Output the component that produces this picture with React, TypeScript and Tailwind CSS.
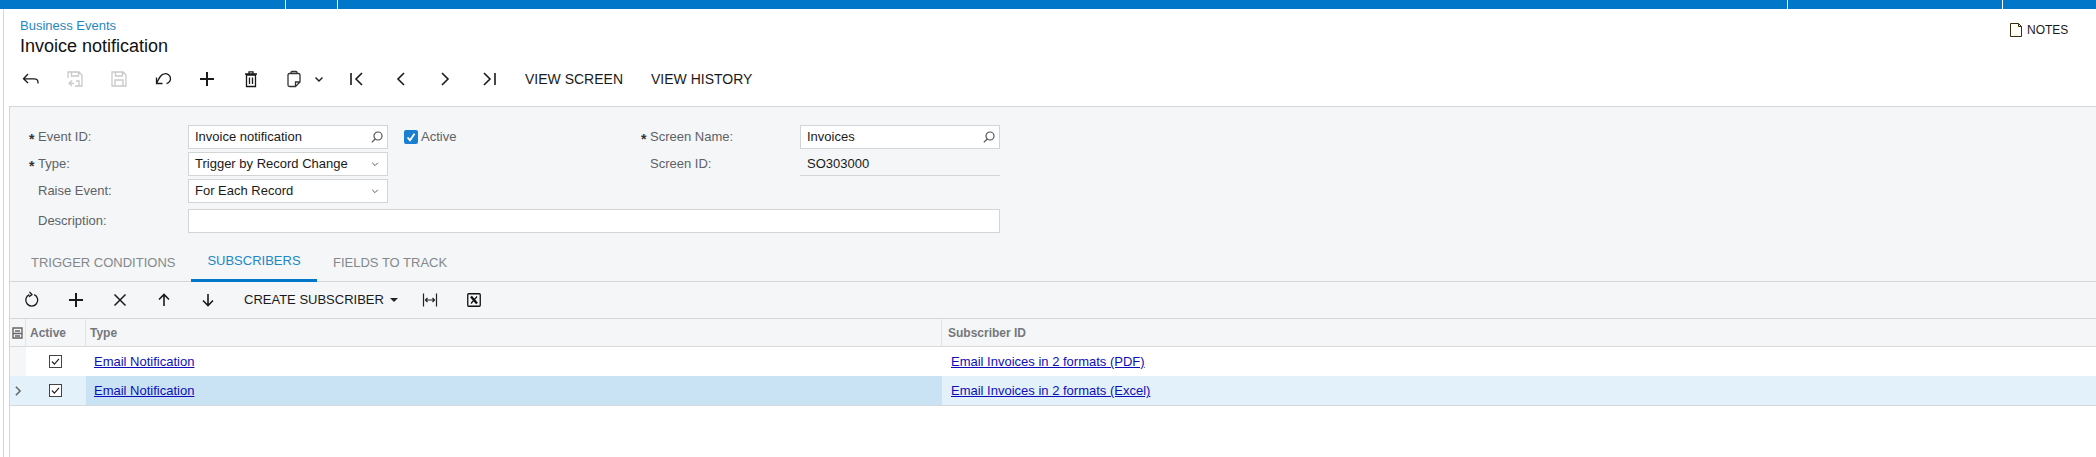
import React from "react";

const FONT = "font-['Liberation_Sans',Arial,sans-serif]";

function Icon({ d, size = 20, color = "#1a1a1a", width = 1.3 }: { d: string; size?: number; color?: string; width?: number }) {
  return (
    <svg width={size} height={size} viewBox="0 0 20 20" fill="none" stroke={color} strokeWidth={width}>
      <path d={d} />
    </svg>
  );
}

const ICONS = {
  back: "M7 5 L2.5 9.8 L7 14 M2.5 9.8 H13.5 a3.5 3.5 0 0 1 3.5 3.5 v1.2",
  saveBack: "M3 9V3h11l3 3v11h-7 M6.5 3v4h7V3 M11 12h3v5 M7 11.5l-3 2.8 3 2.7 M4 14.3h5",
  save: "M3 3h11l3 3v11H3z M6.5 3v4h7V3 M6 17v-6h8v6",
  undo: "M3.5 8.5V14.5H9.5 M3.5 14.5 C6 9 8 4.8 11.5 4.8 a5 5 0 0 1 2 9.8",
  plus: "M3 10H17 M10 3V17",
  trash: "M5.5 6h9v11.5h-9z M4 5h12 M8 4.5V2.8h4v1.7 M8.5 8.5v6.5 M11.5 8.5v6.5",
  copy: "M7 4.5H5.5a1.5 1.5 0 0 0-1.5 1.5V16a1.5 1.5 0 0 0 1.5 1.5H11.5L16 13V6a1.5 1.5 0 0 0-1.5-1.5H13 M7 4.5V3.5a1 1 0 0 1 1-1h4a1 1 0 0 1 1 1V4.5z M16 13h-4.5v4.5",
  chevronDown: "M6.5 8.5l3.5 3.5 3.5-3.5",
  first: "M4 4V16 M15 4L9 10l6 6",
  prev: "M13 4L7 10l6 6",
  next: "M7 4l6 6-6 6",
  last: "M16 4V16 M5 4l6 6-6 6",
  refresh: "M12.2 4.6 A6 6 0 1 1 7.3 4.6 M7.5 2 L10 4.6 L7 6.8",
  close: "M4.5 4.5L15.5 15.5 M15.5 4.5L4.5 15.5",
  up: "M10 16V4.5 M5 9.5L10 4.5l5 5",
  down: "M10 4V15.5 M5 10.5l5 5 5-5",
  fit: "M3.5 3.5V16.5 M16.5 3.5V16.5 M5.5 10H14.5 M7.5 8L5.5 10l2 2 M12.5 8l2 2-2 2",
};

function ToolButton({ d, color, width }: { d: string; color?: string; width?: number }) {
  return (
    <div className="w-[44px] h-full flex items-center justify-center">
      <Icon d={d} color={color} width={width} />
    </div>
  );
}

function ExcelIcon() {
  return (
    <svg width="14" height="14" viewBox="0 0 14 14" fill="none">
      <rect x="0.75" y="0.75" width="12.5" height="12.5" rx="1" stroke="#111" strokeWidth="1.3" />
      <path d="M4 3.5L10 10.5" stroke="#111" strokeWidth="2.4" />
      <path d="M10 3.5L4 10.5" stroke="#111" strokeWidth="1.2" />
    </svg>
  );
}

function FormLabel({ text, required }: { text: string; required?: boolean }) {
  return (
    <div className="flex items-center w-[159px] shrink-0 text-[13px] text-[#5f6266]">
      <span className="w-[9px] text-[14px] leading-[14px] font-bold text-[#333] pt-[3px]">{required ? "*" : ""}</span>
      <span className="pb-[1px]">{text}</span>
    </div>
  );
}

function Field({ text, icon, className }: { text?: string; icon?: "search" | "chevron"; className?: string }) {
  return (
    <div className={`flex items-center justify-between h-[24px] pl-[6px] pr-[3px] bg-white border border-[#d2d4d6] text-[13px] text-[#1a1a1a] ${className ?? "w-[200px]"}`}>
      <span>{text}</span>
      {icon === "search" && (
        <svg width="14" height="14" viewBox="0 0 14 14" fill="none" stroke="#555" strokeWidth="1.2">
          <circle cx="8" cy="6" r="4" />
          <path d="M5.2 9L1.8 12.4" />
        </svg>
      )}
      {icon === "chevron" && (
        <span className="mr-[1px]">
          <Icon d="M6.5 8.5l3.5 3.5 3.5-3.5" size={16} color="#555" width={1.2} />
        </span>
      )}
    </div>
  );
}

function GridCheck() {
  return (
    <svg width="13" height="13" viewBox="0 0 13 13" fill="none">
      <rect x="0.5" y="0.5" width="12" height="12" fill="white" stroke="#444" />
      <path d="M3 6.5l2.4 2.6L10 3.8" stroke="#222" strokeWidth="1.2" />
    </svg>
  );
}

function GridRow({ type, subscriber, selected }: { type: string; subscriber: string; selected?: boolean }) {
  return (
    <div className={`flex text-[13px] ${selected ? "h-[30px] bg-[#e3f1fb] border-b border-[#d5d7d9]" : "h-[29px] bg-white"}`}>
      <div className={`w-[16px] flex items-center justify-center ${selected ? "" : "bg-[#f4f6f8]"}`}>
        {selected && <Icon d="M7 4l6 6-6 6" size={14} color="#666" width={2.2} />}
      </div>
      <div className="w-[60px] flex items-center justify-center pr-[1px]">
        <GridCheck />
      </div>
      <div className={`w-[856px] flex items-center pl-[8px] pt-[1px] ${selected ? "bg-[#c9e3f5]" : ""}`}>
        <a className="underline text-[#0e0eb8]">{type}</a>
      </div>
      <div className="flex-1 flex items-center pl-[9px] pt-[1px]">
        <a className="underline text-[#0e0eb8]">{subscriber}</a>
      </div>
    </div>
  );
}

export default function App() {
  return (
    <div className={`${FONT} w-[2096px] h-[457px] flex flex-col overflow-hidden bg-white text-[#1a1a1a]`}>
      {/* Top bar */}
      <div className="h-[9px] shrink-0 flex bg-[#0277c9]">
        <div className="w-[286px] border-r border-white" />
        <div className="w-[52px] border-r border-white" />
        <div className="w-[1450px] border-r border-white" />
        <div className="w-[215px] border-r border-white" />
      </div>

      <div className="flex-1 flex flex-col ml-[3px] border-l border-[#d4d6d8]">
        {/* Title */}
        <div className="flex justify-between pl-[16px] pt-[9px] h-[50px] shrink-0">
          <div>
            <div className="text-[13px] leading-[16px] text-[#1f88c4]">Business Events</div>
            <div className="text-[18px] leading-[22px] mt-[1px] text-[#111]">Invoice notification</div>
          </div>
          <div className="flex items-center h-[24px] w-[87px] text-[12px] shrink-0">
            <svg width="14" height="16" viewBox="0 0 14 16" fill="#fffef5" stroke="#3a2a10" strokeWidth="1" className="mr-[4px]">
              <path d="M1.5 1.5H9.5L12.5 4.5V14.5H1.5z M9.5 1.5V4.5H12.5" />
            </svg>
            NOTES
          </div>
        </div>

        {/* Main toolbar */}
        <div className="flex items-center h-[40px] pl-[5px] shrink-0 text-[14px]">
          <ToolButton d={ICONS.back} />
          <ToolButton d={ICONS.saveBack} color="#c9c9c9" />
          <ToolButton d={ICONS.save} color="#c9c9c9" />
          <ToolButton d={ICONS.undo} />
          <ToolButton d={ICONS.plus} width={2} />
          <ToolButton d={ICONS.trash} />
          <div className="w-[62px] h-full flex items-center pl-[11px]">
            <Icon d={ICONS.copy} color="#333" />
            <span className="ml-[5px]">
              <Icon d={ICONS.chevronDown} width={1.4} />
            </span>
          </div>
          <ToolButton d={ICONS.first} width={1.6} />
          <ToolButton d={ICONS.prev} width={1.6} />
          <ToolButton d={ICONS.next} width={1.6} />
          <ToolButton d={ICONS.last} width={1.6} />
          <div className="px-[14px]">VIEW SCREEN</div>
          <div className="px-[14px]">VIEW HISTORY</div>
        </div>

        {/* Form panel + grid */}
        <div className="flex-1 flex flex-col ml-[5px] mt-[7px] border-l border-t border-[#d4d6d8]">
          <div className="bg-[#f4f6f8]">
            <div className="flex flex-col pt-[18px] pl-[19px] h-[136px]">
              <div className="flex items-center h-[24px] mb-[3px]">
                <div className="flex items-center w-[612px]">
                  <FormLabel text="Event ID:" required />
                  <Field text="Invoice notification" icon="search" />
                  <div className="flex items-center ml-[16px] text-[13px] text-[#5f6266]">
                    <span className="w-[14px] h-[14px] rounded-[2px] bg-[#1a7fd0] flex items-center justify-center mr-[3px]">
                      <svg width="10" height="10" viewBox="0 0 10 10" fill="none" stroke="white" strokeWidth="1.8">
                        <path d="M1.5 5.5L4 8.2 8.5 1.8" />
                      </svg>
                    </span>
                    <span className="pb-[1px]">Active</span>
                  </div>
                </div>
                <FormLabel text="Screen Name:" required />
                <Field text="Invoices" icon="search" />
              </div>
              <div className="flex items-center h-[24px] mb-[3px]">
                <div className="flex items-center w-[612px]">
                  <FormLabel text="Type:" required />
                  <Field text="Trigger by Record Change" icon="chevron" />
                </div>
                <FormLabel text="Screen ID:" />
                <div className="w-[200px] h-[24px] pl-[7px] flex items-center border-b border-[#d2d4d6] text-[13px]">SO303000</div>
              </div>
              <div className="flex items-center h-[24px] mb-[6px]">
                <FormLabel text="Raise Event:" />
                <Field text="For Each Record" icon="chevron" />
              </div>
              <div className="flex items-center h-[24px]">
                <FormLabel text="Description:" />
                <Field className="w-[812px]" />
              </div>
            </div>

            {/* Tabs */}
            <div className="flex h-[39px] border-b border-[#d4d6d8] text-[13px] text-[#84888c]">
              <div className="w-[181px] flex items-center pl-[21px] pt-[2px]">TRIGGER CONDITIONS</div>
              <div className="w-[126px] h-[39px] flex items-center justify-center border-b-[3px] border-[#0277c9] text-[#1f88c4]">SUBSCRIBERS</div>
              <div className="pl-[16px] flex items-center pt-[2px]">FIELDS TO TRACK</div>
            </div>

            {/* Grid toolbar */}
            <div className="flex items-center h-[37px] border-b border-[#d4d6d8] text-[13px]">
              <ToolButton d={ICONS.refresh} />
              <ToolButton d={ICONS.plus} width={2} />
              <ToolButton d={ICONS.close} width={1.5} />
              <ToolButton d={ICONS.up} width={1.6} />
              <ToolButton d={ICONS.down} width={1.6} />
              <div className="flex items-center pl-[14px] w-[178px]">
                <span className="pb-[1px]">CREATE SUBSCRIBER</span>
                <span className="ml-[6px] w-0 h-0 border-x-[4.5px] border-x-transparent border-t-[4.5px] border-t-[#222]" />
              </div>
              <ToolButton d={ICONS.fit} color="#222" width={1.2} />
              <div className="w-[44px] h-full flex items-center justify-center">
                <ExcelIcon />
              </div>
            </div>

            {/* Grid header */}
            <div className="flex h-[28px] border-b border-[#d8dadc] text-[12px] font-bold text-[#74787c]">
              <div className="w-[16px] flex items-center justify-center border-r border-[#e2e4e6]">
                <svg width="11" height="12" viewBox="0 0 11 12" fill="none" stroke="#666" strokeWidth="1.4">
                  <path d="M1 1h9v10H1z M3 4h5 M1 6.5h9 M3 9h5" />
                </svg>
              </div>
              <div className="w-[60px] flex items-center pl-[4px] pt-[1px] border-r border-[#e2e4e6]">Active</div>
              <div className="w-[856px] flex items-center pl-[4px] pt-[1px] border-r border-[#e2e4e6]">Type</div>
              <div className="flex items-center pl-[6px] pt-[1px]">Subscriber ID</div>
            </div>
          </div>

          {/* Grid rows */}
          <GridRow type="Email Notification" subscriber="Email Invoices in 2 formats (PDF)" />
          <GridRow type="Email Notification" subscriber="Email Invoices in 2 formats (Excel)" selected />
        </div>
      </div>
    </div>
  );
}
